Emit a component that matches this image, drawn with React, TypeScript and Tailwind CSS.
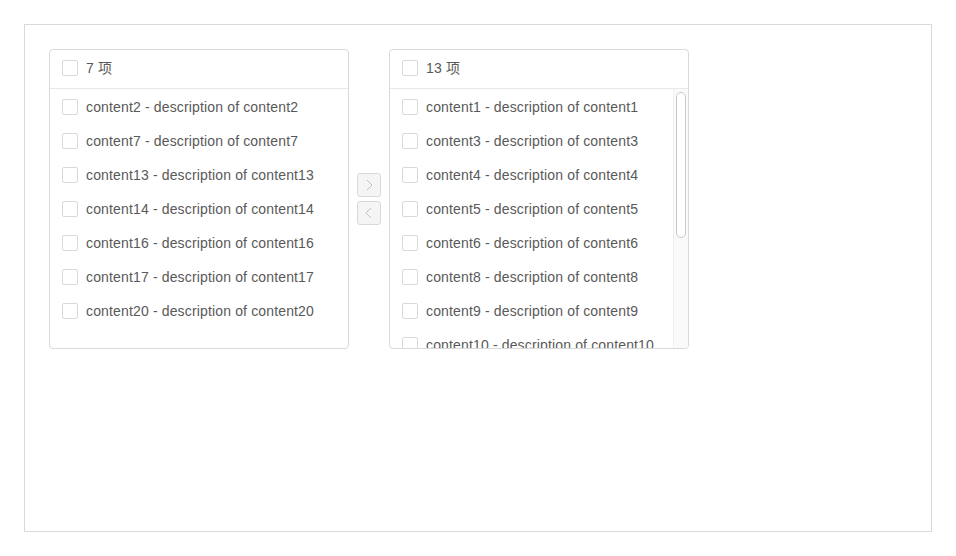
import React from "react";

const font = { fontFamily: '"Liberation Sans", "Noto Sans CJK SC", sans-serif' };

function Box() {
  return <span className="inline-block w-4 h-4 shrink-0 rounded-[2px] border border-[#d9d9d9] bg-white" />;
}

function Item({ n }: { n: number }) {
  return (
    <li className="flex items-center h-[34px] pl-3 whitespace-nowrap">
      <Box />
      <span className="ml-2 text-[14px] tracking-[0.15px] text-[#595959]">{`content${n} - description of content${n}`}</span>
    </li>
  );
}

function List({ count, items, scroll }: { count: number; items: number[]; scroll?: boolean }) {
  return (
    <div className="w-[300px] h-[300px] border border-[#d9d9d9] rounded-[4px] bg-white flex flex-col overflow-hidden relative">
      <div className="h-[39px] shrink-0 border-b border-[#e8e8e8] flex items-center pl-3 pb-[2px]">
        <Box />
        <span className="ml-2 text-[14px] tracking-[0.15px] text-[#595959]">{count} 项</span>
      </div>
      <ul className="flex-1 overflow-hidden pt-px">
        {items.map((n) => (
          <Item key={n} n={n} />
        ))}
      </ul>
      {scroll && (
        <div className="absolute right-0 top-[39px] bottom-0 w-[15px] bg-[#fafafa] border-l border-[#f0f0f0]">
          <div className="absolute left-[2px] top-[3px] w-[10px] h-[146px] rounded-full border border-[#c8c8c8] bg-white" />
        </div>
      )}
    </div>
  );
}

function Btn({ dir }: { dir: "r" | "l" }) {
  return (
    <div className="w-6 h-6 rounded-[3px] border border-[#d9d9d9] bg-[#f5f5f5] flex items-center justify-center">
      <svg width="10" height="12" viewBox="0 0 10 12" fill="none" stroke="#bfbfbf" strokeWidth="1">
        {dir === "r" ? <path d="M3 1l5 5-5 5" /> : <path d="M7 1L2 6l5 5" />}
      </svg>
    </div>
  );
}

export default function App() {
  return (
    <div className="w-[956px] h-[556px] bg-white p-6" style={font}>
      <div className="w-[908px] h-[508px] border border-[#d9d9d9] p-6">
        <div className="flex items-center">
          <List count={7} items={[2, 7, 13, 14, 16, 17, 20]} />
          <div className="w-[40px] flex flex-col items-center gap-1">
            <Btn dir="r" />
            <Btn dir="l" />
          </div>
          <List count={13} items={[1, 3, 4, 5, 6, 8, 9, 10]} scroll />
        </div>
      </div>
    </div>
  );
}
